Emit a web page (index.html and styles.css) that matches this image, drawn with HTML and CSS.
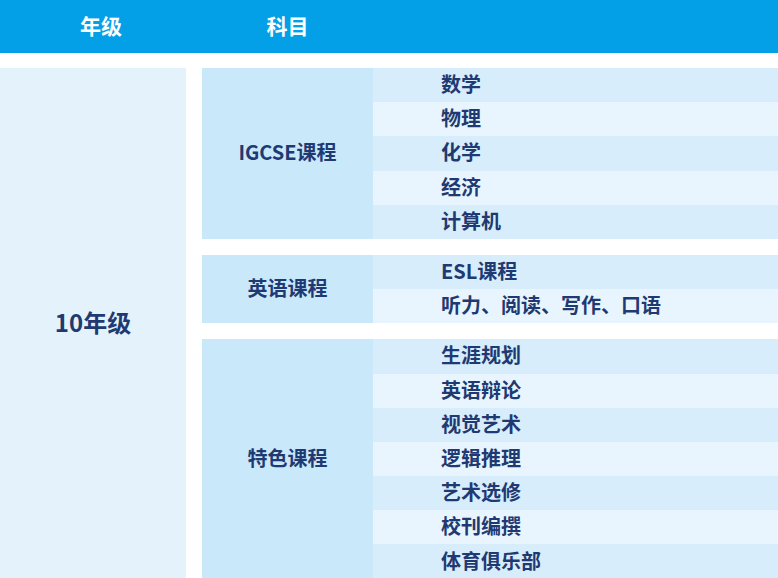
FILE: index.html
```html
<!DOCTYPE html>
<html lang="zh">
<head>
<meta charset="utf-8">
<link rel="stylesheet" href="styles.css">
</head>
<body>
<div class="page">
  <div class="head">
    <div class="h-grade">年级</div>
    <div class="h-subj">科目</div>
  </div>
  <div class="body">
    <div class="grade">10年级</div>
    <div class="groups">
      <div class="group">
        <div class="cat">IGCSE课程</div>
        <div class="rows">
          <div class="row">数学</div>
          <div class="row">物理</div>
          <div class="row">化学</div>
          <div class="row">经济</div>
          <div class="row">计算机</div>
        </div>
      </div>
      <div class="group">
        <div class="cat">英语课程</div>
        <div class="rows">
          <div class="row">ESL课程</div>
          <div class="row">听力、阅读、写作、口语</div>
        </div>
      </div>
      <div class="group">
        <div class="cat">特色课程</div>
        <div class="rows">
          <div class="row">生涯规划</div>
          <div class="row">英语辩论</div>
          <div class="row">视觉艺术</div>
          <div class="row">逻辑推理</div>
          <div class="row">艺术选修</div>
          <div class="row">校刊编撰</div>
          <div class="row">体育俱乐部</div>
        </div>
      </div>
    </div>
  </div>
</div>
</body>
</html>
```
FILE: styles.css
```css
html, body {
  margin: 0;
  padding: 0;
  background: #ffffff;
}
body {
  font-family: "Noto Sans CJK SC", "Noto Sans", sans-serif;
  font-weight: 700;
  color: #1f3a72;
}
.page {
  width: 778px;
  height: 578px;
  overflow: hidden;
}
.head {
  display: flex;
  height: 53px;
  background: #03a0e8;
  color: #ffffff;
  font-size: 21px;
  align-items: center;
  padding-bottom: 3px;
  box-sizing: border-box;
}
.h-grade {
  width: 202px;
  text-align: center;
}
.h-subj {
  width: 171px;
  text-align: center;
}
.body {
  display: flex;
  margin-top: 15px;
  gap: 16px;
}
.grade {
  width: 186px;
  flex: none;
  background: #e4f2fc;
  display: flex;
  align-items: center;
  justify-content: center;
  font-size: 24px;
  height: 510px;
  padding-bottom: 4px;
  box-sizing: border-box;
  align-self: flex-start;
}
.groups {
  flex: 1;
  display: flex;
  flex-direction: column;
  gap: 16px;
}
.group {
  display: flex;
}
.cat {
  width: 171px;
  flex: none;
  background: #c9e8fa;
  display: flex;
  align-items: center;
  justify-content: center;
  font-size: 20px;
  padding-bottom: 3px;
  box-sizing: border-box;
}
.rows {
  flex: 1;
  display: flex;
  flex-direction: column;
}
.row {
  height: 34.2px;
  display: flex;
  align-items: center;
  padding-left: 68px;
  padding-bottom: 3px;
  box-sizing: border-box;
  font-size: 20px;
  background: #d7edfb;
}
.row:nth-child(even) {
  background: #e8f5fe;
}
```
